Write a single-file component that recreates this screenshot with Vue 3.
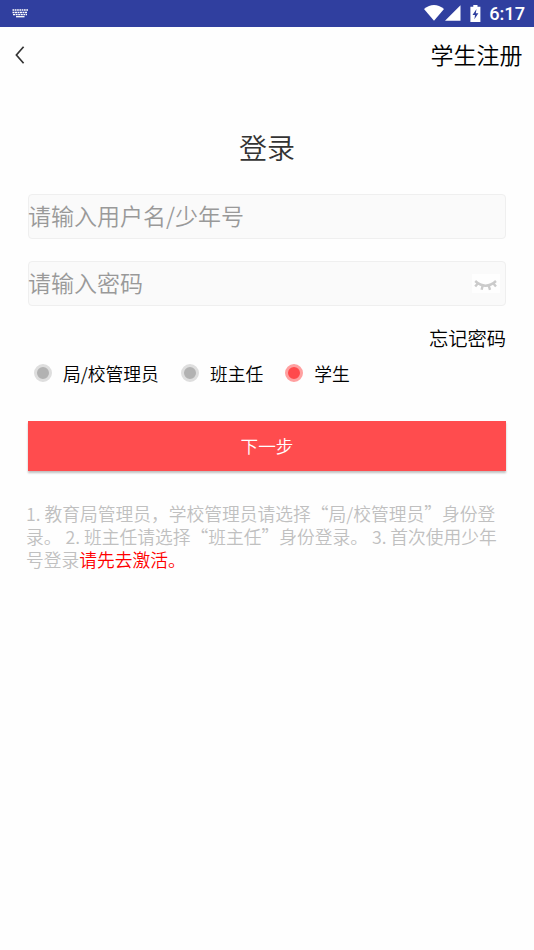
<script setup>
import { ref } from 'vue'

const roles = [
  { id: 'admin', label: '局/校管理员' },
  { id: 'teacher', label: '班主任' },
  { id: 'student', label: '学生' }
]
const selected = ref('student')
const username = ref('')
const password = ref('')
</script>

<template>
  <div class="screen">
    <div class="status">
      <svg class="keyboard" width="16" height="9" viewBox="0 0 16 9">
        <g stroke="#fff" fill="none">
          <path d="M0.5 1H16" stroke-width="1.3" stroke-dasharray="1.7 .6" />
          <path d="M0.5 3.5H15.5" stroke-width="1.5" stroke-dasharray="2 .5" />
          <path d="M1 5.7H15" stroke-width="1.3" stroke-dasharray="2 .6" />
          <path d="M4 7.7H12.5" stroke-width="1.3" />
        </g>
      </svg>
      <div class="indicators">
        <svg class="wifi" width="20" height="16" viewBox="0 0 20 16">
          <path d="M0 4Q10-4 20 4L10 15.7Z" fill="#fff" />
        </svg>
        <svg class="signal" width="16" height="16" viewBox="0 0 16 16">
          <path d="M15.5.3V15.7H0Z" fill="#fff" />
        </svg>
        <svg class="battery" width="11" height="17" viewBox="0 0 11 17">
          <path d="M3.3 0H7.5V1.7H10.4V17H.4V1.7H3.3Z" fill="#fff" />
          <path d="M6.5 4L2.5 10H5L4.4 14.2L8.4 8.2H5.8Z" fill="#303f9f" />
        </svg>
        <span class="clock">6:17</span>
      </div>
    </div>

    <header class="header">
      <svg class="back" width="10" height="18" viewBox="0 0 10 18">
        <path d="M8.6 .8L1.4 9L8.6 17.2" fill="none" stroke="#333" stroke-width="1.7" />
      </svg>
      <a class="register">学生注册</a>
    </header>

    <main class="content">
      <h1 class="title">登录</h1>
      <div class="field">
        <input v-model="username" type="text" placeholder="请输入用户名/少年号" />
      </div>
      <div class="field">
        <input v-model="password" type="password" placeholder="请输入密码" />
        <span class="eye">
          <svg width="28" height="19" viewBox="0 0 28 19">
            <g fill="none" stroke="#cbcbcb" stroke-width="2.4">
              <path d="M3.2 7Q13.6 16.5 24 7" />
              <path d="M6 9.2L3.2 12.6M10.8 11.2L9.6 15.8M16.6 11.2L18 15.8M21.2 9.2L24 12.6" />
            </g>
          </svg>
        </span>
      </div>
      <a class="forgot">忘记密码</a>
      <div class="roles">
        <label
          v-for="role in roles"
          :key="role.id"
          class="role"
          :class="{ active: selected === role.id }"
          @click="selected = role.id"
        >
          <span class="dot"></span>
          <span>{{ role.label }}</span>
        </label>
      </div>
      <button class="next" type="button">下一步</button>
      <p class="notice">
        1. 教育局管理员，学校管理员请选择“局/校管理员”身份登录。 2. 班主任请选择“班主任”身份登录。 3. 首次使用少年号登录<span class="activate">请先去激活。</span>
      </p>
    </main>
  </div>
</template>

<style>
body {
  margin: 0;
  background: #fefefe;
}
</style>

<style scoped>
.screen {
  width: 534px;
  height: 950px;
  box-sizing: border-box;
  overflow: hidden;
  background: #fefefe;
  font-family: "Noto Sans CJK SC", sans-serif;
  font-weight: 350;
  color: #000;
}
.status {
  height: 26.5px;
  padding: 0 9px 0 12px;
  display: flex;
  align-items: center;
  justify-content: space-between;
  background: #303f9f;
}
.indicators {
  display: flex;
  align-items: center;
}
.signal {
  margin-left: 1.5px;
}
.battery {
  margin-left: 9px;
}
.clock {
  margin-left: 8px;
  padding-top: 1px;
  font: 500 18.2px/26px Roboto, sans-serif;
  color: #fff;
}
.header {
  height: 55px;
  padding: 0 11.5px 0 15px;
  display: flex;
  align-items: center;
  justify-content: space-between;
}
.back {
  margin-top: 1px;
}
.register {
  margin-top: -1px;
  font-size: 23px;
  line-height: 34px;
}
.content {
  padding: 0 28px;
  display: flex;
  flex-direction: column;
}
.title {
  margin: 44.5px 0 26px;
  font-size: 28px;
  line-height: 42px;
  font-weight: 350;
  text-align: center;
  color: #333;
}
.field {
  height: 45px;
  box-sizing: border-box;
  margin-bottom: 22px;
  padding-right: 5px;
  display: flex;
  align-items: center;
  border: 1px solid #efefef;
  border-radius: 4px;
  background: #fafafa;
}
.field input {
  flex: 1;
  min-width: 0;
  height: 40px;
  margin: -3px 0 0 -1px;
  padding: 0;
  border: 0;
  outline: 0;
  background: transparent;
  font: 350 23px "Noto Sans CJK SC", sans-serif;
}
.field input::placeholder {
  color: #999;
  opacity: 1;
}
.eye {
  display: flex;
  background: #fefefe;
}
.forgot {
  align-self: flex-end;
  margin-top: -5px;
  font-size: 19.3px;
  line-height: 30px;
}
.roles {
  margin: 6px 0 0 6px;
  display: flex;
  gap: 22px;
}
.role {
  display: flex;
  align-items: center;
  gap: 11px;
  font-size: 17.8px;
  line-height: 28px;
}
.dot {
  width: 18px;
  height: 18px;
  box-sizing: border-box;
  border: 3px solid #dedede;
  border-radius: 50%;
  background: #b2b2b2;
}
.active .dot {
  border-color: #ffa0a0;
  background: #ff4a4c;
}
.next {
  height: 50px;
  margin-top: 34px;
  padding: 0 0 2px;
  border: 0;
  background: #ff4c4e;
  box-shadow: 0 2px 2px rgba(0, 0, 0, 0.25);
  color: #fff;
  font: 350 17.6px "Noto Sans CJK SC", sans-serif;
}
.notice {
  margin: 31px 0 0 -2px;
  width: 476px;
  font-size: 17.75px;
  line-height: 23px;
  color: #c0c0c0;
}
.activate {
  color: #f00;
}
</style>
